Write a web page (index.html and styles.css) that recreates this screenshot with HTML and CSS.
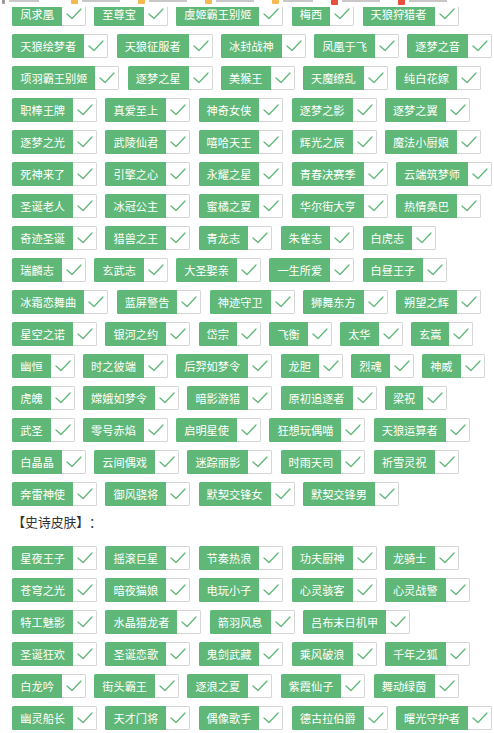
FILE: index.html
```html
<!DOCTYPE html>
<html lang="zh-CN">
<head>
<meta charset="utf-8">
<title>皮肤</title>
<link rel="stylesheet" href="styles.css">
</head>
<body>
<svg class="defs" aria-hidden="true"><symbol id="chk" viewBox="0 1 23 22"><polyline points="5,12 10,16.5 19,7" /></symbol></svg>
<div class="bookmarks">
  <span class="bm"><i class="bm-ico gray"></i><b class="bm-txt w30"></b></span>
  <span class="bm at57"><i class="bm-ico orange"></i><b class="bm-txt w40"></b></span>
  <span class="bm"><i class="bm-ico orange"></i><b class="bm-txt w40"></b></span>
  <span class="bm"><i class="bm-ico orange"></i><b class="bm-txt w40"></b></span>
  <span class="bm"><i class="bm-ico orange"></i><b class="bm-txt w30"></b></span>
  <span class="bm"><i class="bm-ico red"></i><b class="bm-txt w40"></b></span>
  <span class="bm"><i class="bm-ico red"></i><b class="bm-txt w40"></b></span>
</div>
<main class="page">
  <div class="skins">
    <label class="skin"><span class="skin-name">凤求凰</span><i class="skin-check"><svg><use href="#chk"/></svg></i></label>
    <label class="skin"><span class="skin-name">至尊宝</span><i class="skin-check"><svg><use href="#chk"/></svg></i></label>
    <label class="skin"><span class="skin-name">虞姬霸王别姬</span><i class="skin-check"><svg><use href="#chk"/></svg></i></label>
    <label class="skin"><span class="skin-name">梅西</span><i class="skin-check"><svg><use href="#chk"/></svg></i></label>
    <label class="skin"><span class="skin-name">天狼狩猎者</span><i class="skin-check"><svg><use href="#chk"/></svg></i></label>
    <label class="skin"><span class="skin-name">天狼绘梦者</span><i class="skin-check"><svg><use href="#chk"/></svg></i></label>
    <label class="skin"><span class="skin-name">天狼征服者</span><i class="skin-check"><svg><use href="#chk"/></svg></i></label>
    <label class="skin"><span class="skin-name">冰封战神</span><i class="skin-check"><svg><use href="#chk"/></svg></i></label>
    <label class="skin"><span class="skin-name">凤凰于飞</span><i class="skin-check"><svg><use href="#chk"/></svg></i></label>
    <label class="skin"><span class="skin-name">逐梦之音</span><i class="skin-check"><svg><use href="#chk"/></svg></i></label>
    <label class="skin"><span class="skin-name">项羽霸王别姬</span><i class="skin-check"><svg><use href="#chk"/></svg></i></label>
    <label class="skin"><span class="skin-name">逐梦之星</span><i class="skin-check"><svg><use href="#chk"/></svg></i></label>
    <label class="skin"><span class="skin-name">美猴王</span><i class="skin-check"><svg><use href="#chk"/></svg></i></label>
    <label class="skin"><span class="skin-name">天魔缭乱</span><i class="skin-check"><svg><use href="#chk"/></svg></i></label>
    <label class="skin"><span class="skin-name">纯白花嫁</span><i class="skin-check"><svg><use href="#chk"/></svg></i></label>
    <label class="skin"><span class="skin-name">职棒王牌</span><i class="skin-check"><svg><use href="#chk"/></svg></i></label>
    <label class="skin"><span class="skin-name">真爱至上</span><i class="skin-check"><svg><use href="#chk"/></svg></i></label>
    <label class="skin"><span class="skin-name">神奇女侠</span><i class="skin-check"><svg><use href="#chk"/></svg></i></label>
    <label class="skin"><span class="skin-name">逐梦之影</span><i class="skin-check"><svg><use href="#chk"/></svg></i></label>
    <label class="skin"><span class="skin-name">逐梦之翼</span><i class="skin-check"><svg><use href="#chk"/></svg></i></label>
    <label class="skin"><span class="skin-name">逐梦之光</span><i class="skin-check"><svg><use href="#chk"/></svg></i></label>
    <label class="skin"><span class="skin-name">武陵仙君</span><i class="skin-check"><svg><use href="#chk"/></svg></i></label>
    <label class="skin"><span class="skin-name">嘻哈天王</span><i class="skin-check"><svg><use href="#chk"/></svg></i></label>
    <label class="skin"><span class="skin-name">辉光之辰</span><i class="skin-check"><svg><use href="#chk"/></svg></i></label>
    <label class="skin"><span class="skin-name">魔法小厨娘</span><i class="skin-check"><svg><use href="#chk"/></svg></i></label>
    <label class="skin"><span class="skin-name">死神来了</span><i class="skin-check"><svg><use href="#chk"/></svg></i></label>
    <label class="skin"><span class="skin-name">引擎之心</span><i class="skin-check"><svg><use href="#chk"/></svg></i></label>
    <label class="skin"><span class="skin-name">永耀之星</span><i class="skin-check"><svg><use href="#chk"/></svg></i></label>
    <label class="skin"><span class="skin-name">青春决赛季</span><i class="skin-check"><svg><use href="#chk"/></svg></i></label>
    <label class="skin"><span class="skin-name">云端筑梦师</span><i class="skin-check"><svg><use href="#chk"/></svg></i></label>
    <label class="skin"><span class="skin-name">圣诞老人</span><i class="skin-check"><svg><use href="#chk"/></svg></i></label>
    <label class="skin"><span class="skin-name">冰冠公主</span><i class="skin-check"><svg><use href="#chk"/></svg></i></label>
    <label class="skin"><span class="skin-name">蜜橘之夏</span><i class="skin-check"><svg><use href="#chk"/></svg></i></label>
    <label class="skin"><span class="skin-name">华尔街大亨</span><i class="skin-check"><svg><use href="#chk"/></svg></i></label>
    <label class="skin"><span class="skin-name">热情桑巴</span><i class="skin-check"><svg><use href="#chk"/></svg></i></label>
    <label class="skin"><span class="skin-name">奇迹圣诞</span><i class="skin-check"><svg><use href="#chk"/></svg></i></label>
    <label class="skin"><span class="skin-name">猎兽之王</span><i class="skin-check"><svg><use href="#chk"/></svg></i></label>
    <label class="skin"><span class="skin-name">青龙志</span><i class="skin-check"><svg><use href="#chk"/></svg></i></label>
    <label class="skin"><span class="skin-name">朱雀志</span><i class="skin-check"><svg><use href="#chk"/></svg></i></label>
    <label class="skin"><span class="skin-name">白虎志</span><i class="skin-check"><svg><use href="#chk"/></svg></i></label>
    <label class="skin"><span class="skin-name">瑞麟志</span><i class="skin-check"><svg><use href="#chk"/></svg></i></label>
    <label class="skin"><span class="skin-name">玄武志</span><i class="skin-check"><svg><use href="#chk"/></svg></i></label>
    <label class="skin"><span class="skin-name">大圣娶亲</span><i class="skin-check"><svg><use href="#chk"/></svg></i></label>
    <label class="skin"><span class="skin-name">一生所爱</span><i class="skin-check"><svg><use href="#chk"/></svg></i></label>
    <label class="skin"><span class="skin-name">白昼王子</span><i class="skin-check"><svg><use href="#chk"/></svg></i></label>
    <label class="skin"><span class="skin-name">冰霜恋舞曲</span><i class="skin-check"><svg><use href="#chk"/></svg></i></label>
    <label class="skin"><span class="skin-name">蓝屏警告</span><i class="skin-check"><svg><use href="#chk"/></svg></i></label>
    <label class="skin"><span class="skin-name">神迹守卫</span><i class="skin-check"><svg><use href="#chk"/></svg></i></label>
    <label class="skin"><span class="skin-name">狮舞东方</span><i class="skin-check"><svg><use href="#chk"/></svg></i></label>
    <label class="skin"><span class="skin-name">朔望之辉</span><i class="skin-check"><svg><use href="#chk"/></svg></i></label>
    <label class="skin"><span class="skin-name">星空之诺</span><i class="skin-check"><svg><use href="#chk"/></svg></i></label>
    <label class="skin"><span class="skin-name">银河之约</span><i class="skin-check"><svg><use href="#chk"/></svg></i></label>
    <label class="skin"><span class="skin-name">岱宗</span><i class="skin-check"><svg><use href="#chk"/></svg></i></label>
    <label class="skin"><span class="skin-name">飞衡</span><i class="skin-check"><svg><use href="#chk"/></svg></i></label>
    <label class="skin"><span class="skin-name">太华</span><i class="skin-check"><svg><use href="#chk"/></svg></i></label>
    <label class="skin"><span class="skin-name">玄嵩</span><i class="skin-check"><svg><use href="#chk"/></svg></i></label>
    <label class="skin"><span class="skin-name">幽恒</span><i class="skin-check"><svg><use href="#chk"/></svg></i></label>
    <label class="skin"><span class="skin-name">时之彼端</span><i class="skin-check"><svg><use href="#chk"/></svg></i></label>
    <label class="skin"><span class="skin-name">后羿如梦令</span><i class="skin-check"><svg><use href="#chk"/></svg></i></label>
    <label class="skin"><span class="skin-name">龙胆</span><i class="skin-check"><svg><use href="#chk"/></svg></i></label>
    <label class="skin"><span class="skin-name">烈魂</span><i class="skin-check"><svg><use href="#chk"/></svg></i></label>
    <label class="skin"><span class="skin-name">神威</span><i class="skin-check"><svg><use href="#chk"/></svg></i></label>
    <label class="skin"><span class="skin-name">虎魄</span><i class="skin-check"><svg><use href="#chk"/></svg></i></label>
    <label class="skin"><span class="skin-name">嫦娥如梦令</span><i class="skin-check"><svg><use href="#chk"/></svg></i></label>
    <label class="skin"><span class="skin-name">暗影游猎</span><i class="skin-check"><svg><use href="#chk"/></svg></i></label>
    <label class="skin"><span class="skin-name">原初追逐者</span><i class="skin-check"><svg><use href="#chk"/></svg></i></label>
    <label class="skin"><span class="skin-name">梁祝</span><i class="skin-check"><svg><use href="#chk"/></svg></i></label>
    <label class="skin"><span class="skin-name">武圣</span><i class="skin-check"><svg><use href="#chk"/></svg></i></label>
    <label class="skin"><span class="skin-name">零号赤焰</span><i class="skin-check"><svg><use href="#chk"/></svg></i></label>
    <label class="skin"><span class="skin-name">启明星使</span><i class="skin-check"><svg><use href="#chk"/></svg></i></label>
    <label class="skin"><span class="skin-name">狂想玩偶喵</span><i class="skin-check"><svg><use href="#chk"/></svg></i></label>
    <label class="skin"><span class="skin-name">天狼运算者</span><i class="skin-check"><svg><use href="#chk"/></svg></i></label>
    <label class="skin"><span class="skin-name">白晶晶</span><i class="skin-check"><svg><use href="#chk"/></svg></i></label>
    <label class="skin"><span class="skin-name">云间偶戏</span><i class="skin-check"><svg><use href="#chk"/></svg></i></label>
    <label class="skin"><span class="skin-name">迷踪丽影</span><i class="skin-check"><svg><use href="#chk"/></svg></i></label>
    <label class="skin"><span class="skin-name">时雨天司</span><i class="skin-check"><svg><use href="#chk"/></svg></i></label>
    <label class="skin"><span class="skin-name">祈雪灵祝</span><i class="skin-check"><svg><use href="#chk"/></svg></i></label>
    <label class="skin"><span class="skin-name">奔雷神使</span><i class="skin-check"><svg><use href="#chk"/></svg></i></label>
    <label class="skin"><span class="skin-name">御风骁将</span><i class="skin-check"><svg><use href="#chk"/></svg></i></label>
    <label class="skin"><span class="skin-name">默契交锋女</span><i class="skin-check"><svg><use href="#chk"/></svg></i></label>
    <label class="skin"><span class="skin-name">默契交锋男</span><i class="skin-check"><svg><use href="#chk"/></svg></i></label>
  </div>
  <p class="section-title">【史诗皮肤】：</p>
  <div class="skins">
    <label class="skin"><span class="skin-name">星夜王子</span><i class="skin-check"><svg><use href="#chk"/></svg></i></label>
    <label class="skin"><span class="skin-name">摇滚巨星</span><i class="skin-check"><svg><use href="#chk"/></svg></i></label>
    <label class="skin"><span class="skin-name">节奏热浪</span><i class="skin-check"><svg><use href="#chk"/></svg></i></label>
    <label class="skin"><span class="skin-name">功夫厨神</span><i class="skin-check"><svg><use href="#chk"/></svg></i></label>
    <label class="skin"><span class="skin-name">龙骑士</span><i class="skin-check"><svg><use href="#chk"/></svg></i></label>
    <label class="skin"><span class="skin-name">苍穹之光</span><i class="skin-check"><svg><use href="#chk"/></svg></i></label>
    <label class="skin"><span class="skin-name">暗夜猫娘</span><i class="skin-check"><svg><use href="#chk"/></svg></i></label>
    <label class="skin"><span class="skin-name">电玩小子</span><i class="skin-check"><svg><use href="#chk"/></svg></i></label>
    <label class="skin"><span class="skin-name">心灵骇客</span><i class="skin-check"><svg><use href="#chk"/></svg></i></label>
    <label class="skin"><span class="skin-name">心灵战警</span><i class="skin-check"><svg><use href="#chk"/></svg></i></label>
    <label class="skin"><span class="skin-name">特工魅影</span><i class="skin-check"><svg><use href="#chk"/></svg></i></label>
    <label class="skin"><span class="skin-name">水晶猎龙者</span><i class="skin-check"><svg><use href="#chk"/></svg></i></label>
    <label class="skin"><span class="skin-name">箭羽风息</span><i class="skin-check"><svg><use href="#chk"/></svg></i></label>
    <label class="skin"><span class="skin-name">吕布末日机甲</span><i class="skin-check"><svg><use href="#chk"/></svg></i></label>
    <label class="skin"><span class="skin-name">圣诞狂欢</span><i class="skin-check"><svg><use href="#chk"/></svg></i></label>
    <label class="skin"><span class="skin-name">圣诞恋歌</span><i class="skin-check"><svg><use href="#chk"/></svg></i></label>
    <label class="skin"><span class="skin-name">鬼剑武藏</span><i class="skin-check"><svg><use href="#chk"/></svg></i></label>
    <label class="skin"><span class="skin-name">乘风破浪</span><i class="skin-check"><svg><use href="#chk"/></svg></i></label>
    <label class="skin"><span class="skin-name">千年之狐</span><i class="skin-check"><svg><use href="#chk"/></svg></i></label>
    <label class="skin"><span class="skin-name">白龙吟</span><i class="skin-check"><svg><use href="#chk"/></svg></i></label>
    <label class="skin"><span class="skin-name">街头霸王</span><i class="skin-check"><svg><use href="#chk"/></svg></i></label>
    <label class="skin"><span class="skin-name">逐浪之夏</span><i class="skin-check"><svg><use href="#chk"/></svg></i></label>
    <label class="skin"><span class="skin-name">紫霞仙子</span><i class="skin-check"><svg><use href="#chk"/></svg></i></label>
    <label class="skin"><span class="skin-name">舞动绿茵</span><i class="skin-check"><svg><use href="#chk"/></svg></i></label>
    <label class="skin"><span class="skin-name">幽灵船长</span><i class="skin-check"><svg><use href="#chk"/></svg></i></label>
    <label class="skin"><span class="skin-name">天才门将</span><i class="skin-check"><svg><use href="#chk"/></svg></i></label>
    <label class="skin"><span class="skin-name">偶像歌手</span><i class="skin-check"><svg><use href="#chk"/></svg></i></label>
    <label class="skin"><span class="skin-name">德古拉伯爵</span><i class="skin-check"><svg><use href="#chk"/></svg></i></label>
    <label class="skin"><span class="skin-name">曙光守护者</span><i class="skin-check"><svg><use href="#chk"/></svg></i></label>
  </div>
</main>
</body>
</html>
```

FILE: styles.css
```css
* { box-sizing: border-box; }

html, body {
  margin: 0;
  padding: 0;
  background: #fff;
}

body {
  overflow: hidden;
  font-family: "Noto Sans CJK SC", "Noto Sans", sans-serif;
  color: #333;
  text-spacing-trim: space-all;
}

.defs {
  position: absolute;
  width: 0;
  height: 0;
  overflow: hidden;
}

/* clipped browser bookmark strip that overlays the top of the page */
.bookmarks {
  position: absolute;
  top: 0;
  left: 0;
  right: 0;
  height: 7px;
  background: #fff;
  display: flex;
  align-items: flex-start;
  gap: 18px;
  padding-left: 2px;
  overflow: hidden;
  z-index: 2;
}

.bm {
  display: flex;
  align-items: flex-start;
  gap: 4px;
}

.bm.at57 { margin-left: 14px; }

.bm-ico {
  display: block;
  width: 7px;
  height: 4px;
  border-radius: 0 0 1px 1px;
}

.bm-ico.orange { background: #f5b950; }
.bm-ico.red { background: #e8503d; height: 5px; }
.bm-ico.gray { background: #9a9a9a; width: 3px; }

.bm-txt {
  display: block;
  height: 2px;
  background: #c8c8c8;
}

.bm-txt.w30 { width: 30px; }
.bm-txt.w40 { width: 38px; }

.page {
  width: 498px;
  padding: 1.5px 0 0 12.3px;
}

.skins {
  display: flex;
  flex-wrap: wrap;
  gap: 8.05px 8.4px;
}

.skin {
  display: flex;
  height: 24px;
}

.skin-name {
  display: block;
  background: #5fb878;
  color: #fff;
  font-size: 11.2px;
  line-height: 24px;
  padding: 0 8px;
  border-radius: 1.6px 0 0 1.6px;
  white-space: nowrap;
}

.skin-check {
  display: block;
  width: 24px;
  height: 24px;
  border: 1px solid #d6d6d6;
  border-left: 0;
  border-radius: 0 1.6px 1.6px 0;
  background: #fff;
}

.skin-check svg {
  display: block;
  width: 23px;
  height: 22px;
  fill: none;
  stroke: #5fb878;
  stroke-width: 1.3;
  stroke-linecap: round;
  stroke-linejoin: round;
}

.section-title {
  margin: 3.5px 0 12px;
  font-size: 12.8px;
  line-height: 24px;
  color: #333;
  text-spacing-trim: space-all;
}
```
